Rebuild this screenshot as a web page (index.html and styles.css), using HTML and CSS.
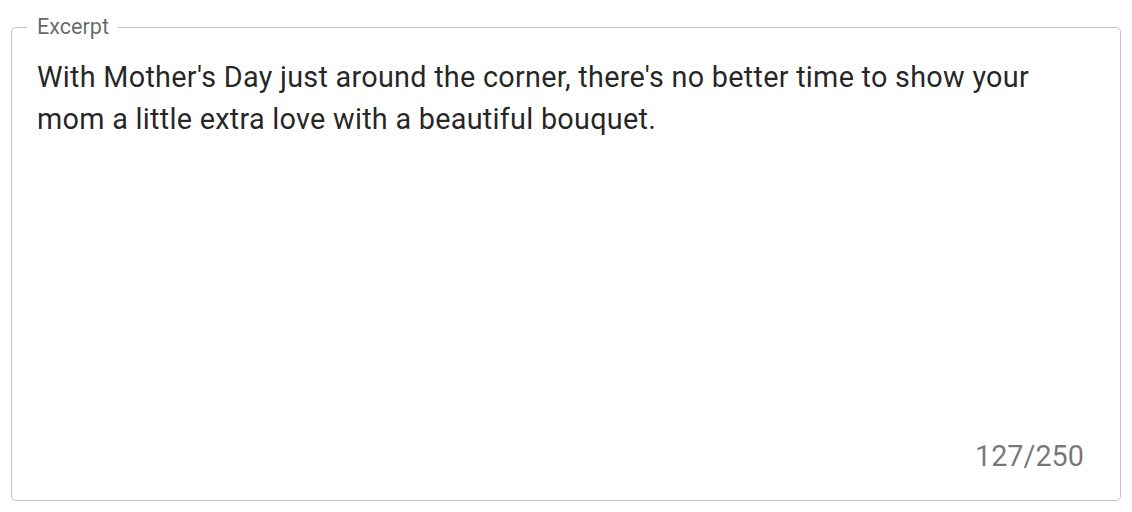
FILE: index.html
```html
<!DOCTYPE html>
<html>
<head>
<meta charset="utf-8">
<link rel="stylesheet" href="styles.css">
</head>
<body>
<fieldset class="field">
  <legend class="label">Excerpt</legend>
  <div class="content">
    <p class="text">With Mother's Day just around the corner, there's no better time to show your mom a little extra love with a beautiful bouquet.</p>
    <div class="counter">127/250</div>
  </div>
</fieldset>
</body>
</html>
```

FILE: styles.css
```css
html, body {
  margin: 0;
  padding: 0;
  background: #ffffff;
}
body {
  font-family: Roboto, "Liberation Sans", sans-serif;
  padding: 12px 11px 11px 11px;
}
.field {
  margin: 0;
  border: 1px solid rgba(0, 0, 0, 0.23);
  border-radius: 5px;
  padding: 0 36px 0 25px;
  height: 489px;
  box-sizing: border-box;
}
.label {
  font-size: 21.6px;
  color: rgba(0, 0, 0, 0.6);
  padding: 0 9px 0 10px;
  margin-left: -10px;
  line-height: 30px;
}
.content {
  display: flex;
  flex-direction: column;
  height: 100%;
}
.text {
  margin: 0 24px 0 0;
  margin-top: 15px;
  font-size: 28.8px;
  letter-spacing: 0.00938em;
  line-height: 41.5px;
  color: rgba(0, 0, 0, 0.87);
  flex: 1;
}
.counter {
  align-self: flex-end;
  font-size: 28.8px;
  color: rgba(0, 0, 0, 0.55);
  margin-bottom: 27px;
}
```
